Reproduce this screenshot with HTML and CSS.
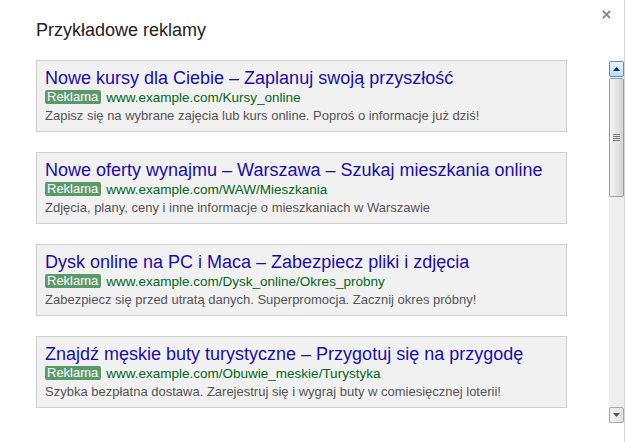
FILE: index.html
```html
<!DOCTYPE html>
<html lang="pl">
<head>
    <meta charset="UTF-8">
    <title>Przykładowe reklamy</title>
    <link rel="stylesheet" href="styles.css">
</head>
<body>
    <div class="dialog">
        <div class="header">
            <h1 class="title">Przykładowe reklamy</h1>
            <span class="close"><svg width="9" height="9" viewBox="0 0 9 9"><path d="M1 1 L8 8 M8 1 L1 8" stroke="#8e8e8e" stroke-width="2"/></svg></span>
        </div>
        <div class="content">
            <div class="ads">
                <div class="ad">
                    <div class="ad-title">Nowe kursy dla Ciebie – Zaplanuj swoją przyszłość</div>
                    <div class="ad-url"><span class="badge">Reklama</span>www.example.com/Kursy_online</div>
                    <div class="ad-desc">Zapisz się na wybrane zajęcia lub kurs online. Poproś o informacje już dziś!</div>
                </div>
                <div class="ad">
                    <div class="ad-title">Nowe oferty wynajmu – Warszawa – Szukaj mieszkania online</div>
                    <div class="ad-url"><span class="badge">Reklama</span>www.example.com/WAW/Mieszkania</div>
                    <div class="ad-desc">Zdjęcia, plany, ceny i inne informacje o mieszkaniach w Warszawie</div>
                </div>
                <div class="ad">
                    <div class="ad-title">Dysk online na PC i Maca – Zabezpiecz pliki i zdjęcia</div>
                    <div class="ad-url"><span class="badge">Reklama</span>www.example.com/Dysk_online/Okres_probny</div>
                    <div class="ad-desc">Zabezpiecz się przed utratą danych. Superpromocja. Zacznij okres próbny!</div>
                </div>
                <div class="ad">
                    <div class="ad-title">Znajdź męskie buty turystyczne – Przygotuj się na przygodę</div>
                    <div class="ad-url"><span class="badge">Reklama</span>www.example.com/Obuwie_meskie/Turystyka</div>
                    <div class="ad-desc">Szybka bezpłatna dostawa. Zarejestruj się i wygraj buty w comiesięcznej loterii!</div>
                </div>
            </div>
            <div class="scrollbar">
                <div class="arrow up"><svg width="7" height="4" viewBox="0 0 7 4"><path d="M0 4 L3.5 0 L7 4 Z" fill="#1d2a3a"/></svg></div>
                <div class="thumb">
                    <span class="grip"></span>
                </div>
                <div class="track"></div>
                <div class="arrow down"><svg width="7" height="4" viewBox="0 0 7 4"><path d="M0 0 L3.5 4 L7 0 Z" fill="#555"/></svg></div>
            </div>
        </div>
    </div>
</body>
</html>
```

FILE: styles.css
```css
body {
  margin: 0;
  background: #fff;
  font-family: Arial, "Liberation Sans", sans-serif;
}

.dialog {
  position: relative;
  width: 624px;
  height: 442px;
  border-right: 1px solid #d4d4d4;
  background: #fff;
}

.header {
  height: 60px;
}

.title {
  margin: 0;
  padding: 19px 0 0 36px;
  font-size: 18px;
  font-weight: normal;
  line-height: 22px;
  color: #222;
}

.close {
  position: absolute;
  top: 10px;
  left: 602px;
  display: flex;
}

.content {
  display: flex;
}

.ads {
  margin-left: 36px;
  width: 531px;
  display: flex;
  flex-direction: column;
  gap: 20px;
}

.ad {
  box-sizing: border-box;
  height: 72px;
  padding: 7px 0 0 8px;
  background: #f1f1f1;
  border: 1px solid #cfcfcf;
  white-space: nowrap;
}

.ad-title {
  font-size: 18px;
  line-height: 21px;
  color: #1a0dab;
}

.ad-url {
  font-size: 13.5px;
  line-height: 18px;
  color: #006621;
}

.badge {
  display: inline-block;
  margin-right: 5px;
  padding: 0 3px 0 2px;
  border-radius: 2px;
  background: #5b9a68;
  color: #fff;
  font-size: 13px;
  line-height: 14px;
  vertical-align: 1px;
}

.ad-desc {
  font-size: 13px;
  line-height: 17px;
  color: #545454;
}

.scrollbar {
  margin: 1px 0 0 auto;
  width: 15px;
  height: 362px;
  display: flex;
  flex-direction: column;
  background: #eeeeee;
}

.arrow {
  box-sizing: border-box;
  height: 16px;
  display: flex;
  align-items: center;
  justify-content: center;
  border: 1px solid #a9a9a9;
  border-radius: 2px;
  background: linear-gradient(to right, #f5f5f5, #e0e0e0);
}

.arrow.up {
  border-color: #4f8fd1;
  background: linear-gradient(to bottom, #eaf5fd, #bcdcf5);
}

.thumb {
  box-sizing: border-box;
  height: 119px;
  margin-top: 1px;
  display: flex;
  align-items: center;
  justify-content: center;
  border: 1px solid #9d9d9d;
  border-radius: 2px;
  background: linear-gradient(to right, #f3f3f3, #e2e2e2 60%, #d3d3d3);
}

.grip {
  width: 7px;
  height: 7px;
  background: repeating-linear-gradient(to bottom, #777 0 1px, transparent 1px 2px);
}

.track {
  flex: 1;
}
```
